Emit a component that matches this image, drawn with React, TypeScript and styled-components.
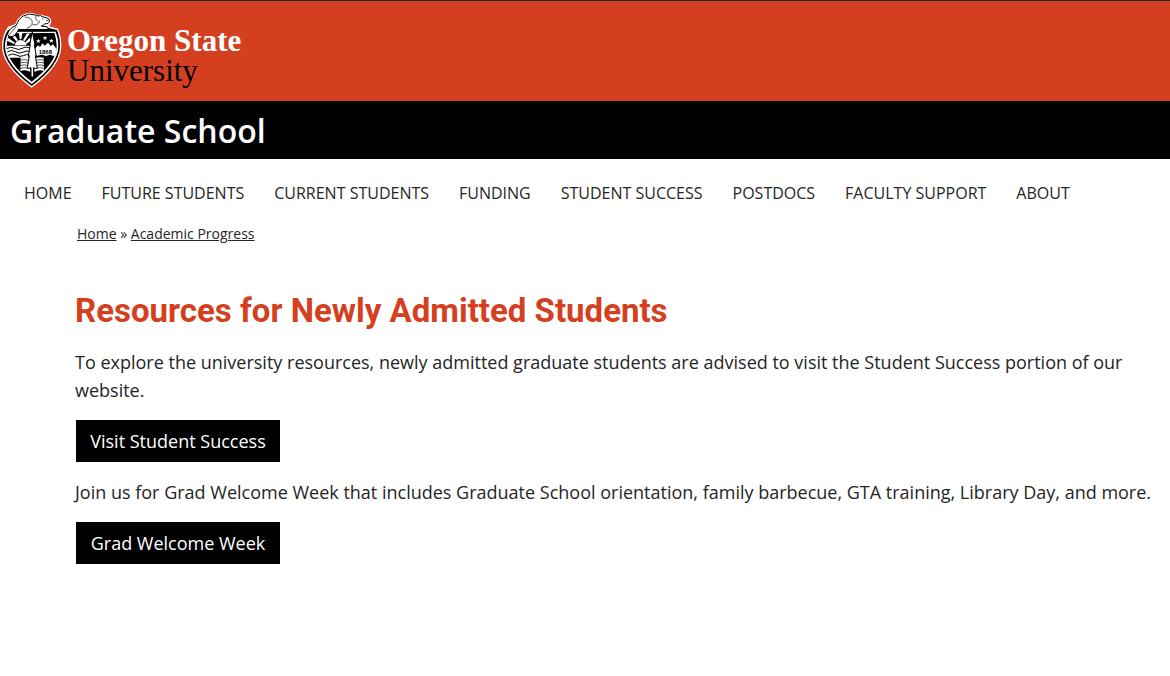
import React from "react";
import styled, { createGlobalStyle } from "styled-components";

const GlobalStyle = createGlobalStyle`
  * { box-sizing: border-box; }
  body {
    margin: 0;
    background: #fff;
    color: #252525;
    font-family: "Open Sans", "Noto Sans", sans-serif;
    font-size: 18px;
    line-height: 28px;
  }
`;

const Masthead = styled.header`
  border-top: 1px solid #252525;
  background: #d43f20;
  padding: 7px 0 9px;
`;

const LogoLink = styled.a`
  display: flex;
  width: fit-content;
  align-items: flex-start;
  gap: 1px;
  text-decoration: none;
`;

const Crest = styled.svg`
  width: 66px;
  height: 84px;
  flex: none;
`;

const Wordmark = styled.span`
  display: flex;
  flex-direction: column;
  padding-top: 18px;
  font-family: "Liberation Serif", "Times New Roman", serif;
  font-size: 31px;
  line-height: 30px;
  color: #000;
`;

const WordmarkTop = styled.span`
  font-weight: 700;
  color: #fff;
`;

const SiteBar = styled.div`
  background: #000;
  padding: 9px 10px 7px;
`;

const SiteName = styled.a`
  display: block;
  color: #fff;
  font-size: 32px;
  font-weight: 600;
  line-height: 42px;
  text-decoration: none;
`;

const Nav = styled.nav`
  padding: 19px 24px 0;
`;

const NavList = styled.ul`
  display: flex;
  flex-wrap: wrap;
  column-gap: 30px;
  margin: 0;
  padding: 0;
  list-style: none;
`;

const NavLink = styled.a`
  color: #252525;
  font-size: 16px;
  text-decoration: none;
  text-transform: uppercase;
`;

const Content = styled.main`
  padding: 0 15px 0 75px;
`;

const Breadcrumb = styled.nav`
  padding: 13px 2px 0;
  font-size: 14px;
  line-height: 28px;
`;

const CrumbLink = styled.a`
  color: #252525;
`;

const Title = styled.h1`
  margin: 42px 0 16px;
  color: #d43f20;
  font-family: Roboto, sans-serif;
  font-size: 33px;
  font-weight: 700;
  line-height: 42px;
`;

const Text = styled.p`
  margin: 0 0 16px;
`;

const Action = styled.a`
  display: block;
  width: fit-content;
  min-width: 204px;
  margin: 0 1px 16px;
  padding: 7px 14px;
  background: #000;
  color: #fff;
  text-align: center;
  text-decoration: none;
`;

const navItems = [
  "Home",
  "Future Students",
  "Current Students",
  "Funding",
  "Student Success",
  "Postdocs",
  "Faculty Support",
  "About",
];

function OsuCrest() {
  return (
    <Crest viewBox="0 0 198 252" aria-hidden="true">
      {/* Shield: white rim, black line, white line, black field */}
      <path d="M24 56 L46 48 Q52 30 70 19 Q92 9 112 20 L124 20 L146 26 Q157 34 153 44 Q151 50 147 55 L174 62 Q184 84 184 114 Q184 174 95 239 Q6 174 6 114 Q6 82 24 56Z" fill="#fff" />
      <path d="M24 66 Q10 86 10 114 Q10 171 95 234 Q180 171 180 114 Q180 86 171 66 L146 60 L50 62Z" fill="#000" />
      <path d="M26 72 Q15 92 15 114 Q15 168 95 228 Q175 168 175 114 Q175 90 167 71 L50 71Z" fill="#fff" />
      <path d="M28 76 Q20 94 20 114 Q20 164 95 221 Q170 164 170 114 Q170 94 163 75Z" fill="#000" />
      {/* Sun rays */}
      <g fill="#fff">
        <path d="M44 112 Q48 97 61 96 Q76 97 80 112Z" />
        <path d="M24 89 L45 104 L42 108 L21 98Z" />
        <path d="M35 83 L42 79 L54 97 L49 100Z" />
        <path d="M57 75 L67 75 L64 94 L59 94Z" />
        <path d="M80 77 L90 76 L74 100 L69 97Z" />
        <path d="M91 88 L91 99 L79 108 L76 103Z" />
      </g>
      {/* Water */}
      <path d="M20 113 H91 V149 H27 Q19 132 20 113Z" fill="#fff" />
      <g fill="none" stroke="#000" strokeWidth="3">
        <path d="M20 122 Q32 114 44 121 T66 121 T90 120" />
        <path d="M22 132 Q34 123 46 131 T68 133 T90 130" />
        <path d="M25 142 Q38 134 49 141 T70 143 T90 140" />
      </g>
      {/* Mountains */}
      <path d="M105 122 L114 112 L120 117 L128 106 L134 113 L144 104 L152 114 L159 109 L170 123 Q169 134 163 145 L150 140 L138 144 L126 140 L105 145Z" fill="#fff" />
      <text x="136" y="137" textAnchor="middle" fontFamily="Liberation Sans, sans-serif" fontWeight="700" fontSize="18" fill="#000">
        1868
      </text>
      {/* Stars */}
      <g fill="#fff">
        <path d="M115 93 l2 4 5 0 -4 3 2 5 -5 -3 -5 3 2 -5 -4 -3 5 0Z" />
        <path d="M135 84 l2 4 5 0 -4 3 2 5 -5 -3 -5 3 2 -5 -4 -3 5 0Z" />
        <path d="M154 92 l2 4 5 0 -4 3 2 5 -5 -3 -5 3 2 -5 -4 -3 5 0Z" />
      </g>
      {/* Open book */}
      <path d="M62 149 Q77 145 91 152 V192 Q78 184 61 189Z M131 149 Q116 145 103 152 V192 Q116 184 132 189Z" fill="#fff" />
      <g fill="none" stroke="#000" strokeWidth="2">
        <path d="M58 157 Q75 152 88 158 M58 165 Q75 160 88 166 M58 173 Q75 168 88 174 M60 181 Q75 176 88 182" />
        <path d="M106 158 Q118 152 135 157 M106 166 Q118 160 135 165 M106 174 Q118 168 135 173 M106 182 Q118 176 133 181" />
      </g>
      {/* Fir tree */}
      <path d="M97 72 L105 110 L103 110 L109 145 L106 143 L112 180 Q106 183 101 179 V207 H93 V179 Q86 183 82 180 L88 143 L85 145 L91 110 L89 110Z" fill="#fff" stroke="#000" strokeWidth="3" />
      {/* Beaver */}
      <path d="M49 52 Q53 34 69 24 Q88 14 106 21 L116 24 Q122 20 126 26 L138 29 Q150 32 149 40 L144 46 Q140 48 135 47 Q130 53 124 54 L143 57 L145 66 L105 68 L56 66 L42 84 Q22 89 23 77 Q28 60 49 52Z" fill="#fff" stroke="#000" strokeWidth="3" strokeLinejoin="round" />
      <path d="M108 24 Q104 32 113 40 M119 38 Q118 46 110 50 L98 50 M74 27 Q96 28 97 44 Q96 56 80 61 M28 80 L48 56 M126 33 h4 M138 37 L145 38" fill="none" stroke="#000" strokeWidth="2" />
      <path d="M54 63 H146 V70 H54Z" fill="#000" />
    </Crest>
  );
}

export default function App() {
  return (
    <>
      <GlobalStyle />
      <Masthead>
        <LogoLink href="#" aria-label="Oregon State University">
          <OsuCrest />
          <Wordmark>
            <WordmarkTop>Oregon State</WordmarkTop>
            <span>University</span>
          </Wordmark>
        </LogoLink>
      </Masthead>
      <SiteBar>
        <SiteName href="#">Graduate School</SiteName>
      </SiteBar>
      <Nav aria-label="Main">
        <NavList>
          {navItems.map((item) => (
            <li key={item}>
              <NavLink href="#">{item}</NavLink>
            </li>
          ))}
        </NavList>
      </Nav>
      <Content>
        <Breadcrumb aria-label="Breadcrumb">
          <CrumbLink href="#">Home</CrumbLink> » <CrumbLink href="#">Academic Progress</CrumbLink>
        </Breadcrumb>
        <Title>Resources for Newly Admitted Students</Title>
        <Text>
          To explore the university resources, newly admitted graduate students are advised to visit the Student
          Success portion of our website.
        </Text>
        <Action href="#">Visit Student Success</Action>
        <Text>
          Join us for Grad Welcome Week that includes Graduate School orientation, family barbecue, GTA training,
          Library Day, and more.
        </Text>
        <Action href="#">Grad Welcome Week</Action>
      </Content>
    </>
  );
}
